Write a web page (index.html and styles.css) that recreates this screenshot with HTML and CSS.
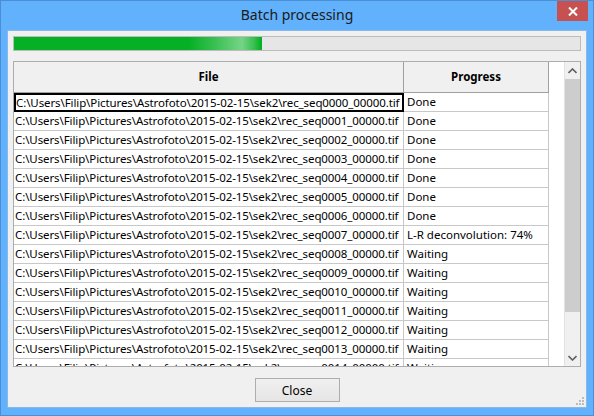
FILE: index.html
```html
<!DOCTYPE html>
<html>
<head>
<meta charset="utf-8">
<link rel="stylesheet" href="styles.css">
</head>
<body>
<div class="window">
  <div class="titlebar">
    <div class="title">Batch processing</div>
    <div class="close-x">
      <svg width="10" height="9" viewBox="0 0 10 9"><path d="M1 0.5 L9 8.5 M9 0.5 L1 8.5" stroke="#fff" stroke-width="2"/></svg>
    </div>
  </div>
  <div class="client">
    <div class="progress"><div class="progress-fill" style="width:248px"></div></div>
    <div class="table">
      <div class="grid-area">
        <div class="row head">
          <div class="c1">File</div>
          <div class="c2">Progress</div>
          <div class="c3"></div>
        </div>
        <div class="rows">
          <div class="row sel"><div class="c1">C:\Users\Filip\Pictures\Astrofoto\2015-02-15\sek2\rec_seq0000_00000.tif</div><div class="c2">Done</div></div>
          <div class="row"><div class="c1">C:\Users\Filip\Pictures\Astrofoto\2015-02-15\sek2\rec_seq0001_00000.tif</div><div class="c2">Done</div></div>
          <div class="row"><div class="c1">C:\Users\Filip\Pictures\Astrofoto\2015-02-15\sek2\rec_seq0002_00000.tif</div><div class="c2">Done</div></div>
          <div class="row"><div class="c1">C:\Users\Filip\Pictures\Astrofoto\2015-02-15\sek2\rec_seq0003_00000.tif</div><div class="c2">Done</div></div>
          <div class="row"><div class="c1">C:\Users\Filip\Pictures\Astrofoto\2015-02-15\sek2\rec_seq0004_00000.tif</div><div class="c2">Done</div></div>
          <div class="row"><div class="c1">C:\Users\Filip\Pictures\Astrofoto\2015-02-15\sek2\rec_seq0005_00000.tif</div><div class="c2">Done</div></div>
          <div class="row"><div class="c1">C:\Users\Filip\Pictures\Astrofoto\2015-02-15\sek2\rec_seq0006_00000.tif</div><div class="c2">Done</div></div>
          <div class="row"><div class="c1">C:\Users\Filip\Pictures\Astrofoto\2015-02-15\sek2\rec_seq0007_00000.tif</div><div class="c2">L-R deconvolution: 74%</div></div>
          <div class="row"><div class="c1">C:\Users\Filip\Pictures\Astrofoto\2015-02-15\sek2\rec_seq0008_00000.tif</div><div class="c2">Waiting</div></div>
          <div class="row"><div class="c1">C:\Users\Filip\Pictures\Astrofoto\2015-02-15\sek2\rec_seq0009_00000.tif</div><div class="c2">Waiting</div></div>
          <div class="row"><div class="c1">C:\Users\Filip\Pictures\Astrofoto\2015-02-15\sek2\rec_seq0010_00000.tif</div><div class="c2">Waiting</div></div>
          <div class="row"><div class="c1">C:\Users\Filip\Pictures\Astrofoto\2015-02-15\sek2\rec_seq0011_00000.tif</div><div class="c2">Waiting</div></div>
          <div class="row"><div class="c1">C:\Users\Filip\Pictures\Astrofoto\2015-02-15\sek2\rec_seq0012_00000.tif</div><div class="c2">Waiting</div></div>
          <div class="row"><div class="c1">C:\Users\Filip\Pictures\Astrofoto\2015-02-15\sek2\rec_seq0013_00000.tif</div><div class="c2">Waiting</div></div>
          <div class="row"><div class="c1">C:\Users\Filip\Pictures\Astrofoto\2015-02-15\sek2\rec_seq0014_00000.tif</div><div class="c2">Waiting</div></div>
        </div>
      </div>
      <div class="scrollbar">
        <div class="arrow">
          <svg width="9" height="6" viewBox="0 0 9 6"><path d="M0.5 5 L4.5 1 L8.5 5" fill="none" stroke="#606060" stroke-width="1.6"/></svg>
        </div>
        <div class="track"><div class="thumb"></div></div>
        <div class="arrow">
          <svg width="9" height="6" viewBox="0 0 9 6"><path d="M0.5 1 L4.5 5 L8.5 1" fill="none" stroke="#606060" stroke-width="1.6"/></svg>
        </div>
      </div>
    </div>
    <div class="footer">
      <button class="btn">Close</button>
    </div>
    <div class="grip">
      <svg width="8" height="8" viewBox="0 0 8 8" fill="#bcbcbc"><rect x="6" y="0" width="2" height="2"/><rect x="3" y="3" width="2" height="2"/><rect x="6" y="3" width="2" height="2"/><rect x="0" y="6" width="2" height="2"/><rect x="3" y="6" width="2" height="2"/><rect x="6" y="6" width="2" height="2"/></svg>
    </div>
  </div>
</div>
</body>
</html>
```
FILE: styles.css
```css
* { box-sizing: border-box; }
html, body { margin: 0; padding: 0; }
body {
  width: 594px; height: 416px; overflow: hidden;
  font-family: "Noto Sans", "Open Sans", sans-serif;
  font-size: 11.5px; color: #000;
}
.window {
  width: 594px; height: 416px;
  background: #62b1fc;
  border: 1px solid #4a8fd6;
  display: flex; flex-direction: column;
}
.titlebar {
  height: 29px; position: relative;
  display: flex; align-items: center; justify-content: center;
}
.title {
  font-size: 14px; color: #1a1a1a; margin-top: -2px;
}
.close-x {
  position: absolute; right: 5px; top: 0;
  width: 31px; height: 20px; background: #c75050;
  display: flex; align-items: center; justify-content: center;
}
.client {
  margin: 0 6px 7px 6px;
  flex: 1;
  background: #f0f0f0;
  border: 1px solid #88b8e8;
  padding: 5px 5px 0 5px;
  display: flex; flex-direction: column;
  position: relative;
}
.progress {
  height: 15px;
  border: 1px solid #bcbcbc;
  background: #e6e6e6;
}
.progress-fill {
  height: 100%;
  background:
    linear-gradient(to right, rgba(255,255,255,0) 0, rgba(255,255,255,0) 175px, rgba(255,255,255,0.2) 200px, rgba(255,255,255,0.45) 228px, rgba(255,255,255,0.2) 240px, rgba(255,255,255,0) 247px),
    linear-gradient(to bottom, #06b025 0, #06b025 100%);
}
.table {
  margin-top: 10px;
  height: 306px;
  border: 1px solid #adadad;
  background: #fff;
  display: flex;
}
.grid-area {
  flex: 1; overflow: hidden;
  display: flex; flex-direction: column;
}
.row { display: flex; height: 19px; flex-shrink: 0; }
.row .c1 {
  width: 390px; flex-shrink: 0;
  padding-left: 1px; line-height: 18px;
  border-bottom: 1px solid #c8c8c8;
  border-right: 1px solid #c8c8c8;
  white-space: nowrap; overflow: hidden;
  letter-spacing: -0.1px;
}
.row .c2 {
  width: 145px; flex-shrink: 0;
  padding-left: 3px; line-height: 18px;
  border-bottom: 1px solid #c8c8c8;
  border-right: 1px solid #c8c8c8;
  white-space: nowrap; overflow: hidden;
}
.row.head { height: 31px; background: #f0f0f0; }
.row.head .c1, .row.head .c2 {
  line-height: 30px; text-align: center; font-weight: bold;
  border-bottom: 1px solid #a0a0a0; border-right: 1px solid #a0a0a0;
  padding-left: 0; letter-spacing: 0;
}
.row.head .c3 { flex: 1; }
.row.sel .c1 { border: 2px solid #000; line-height: 15px; padding-left: 0; }
.scrollbar {
  width: 16px; flex-shrink: 0;
  background: #f0f0f0;
  border-left: 1px solid #e2e2e2;
  display: flex; flex-direction: column;
  margin-left: 15px;
}
.arrow { height: 17px; display: flex; align-items: center; justify-content: center; }
.track { flex: 1; }
.thumb { height: 233px; background: #cdcdcd; }
.footer {
  display: flex; justify-content: center;
  padding-top: 11px;
}
.btn {
  width: 85px; height: 24px;
  border: 1px solid #adadad;
  background: linear-gradient(#f0f0f0, #e5e5e5);
  font-family: "Noto Sans", "Open Sans", sans-serif;
  font-size: 12px; color: #000; padding: 0;
}
.grip { position: absolute; right: 2px; bottom: 2px; line-height: 0; }
```
